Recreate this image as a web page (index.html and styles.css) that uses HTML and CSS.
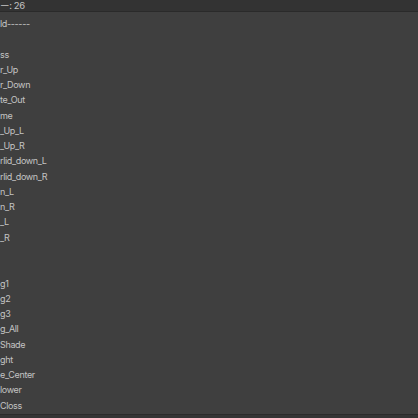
FILE: index.html
```html
<!DOCTYPE html>
<html lang="en">
<head>
  <meta charset="UTF-8" />
  <meta name="viewport" content="width=device-width, initial-scale=1.0"/>
  <title>Blend Shapes</title>
  <link rel="stylesheet" href="styles.css">
</head>
<body>
  <div class="panel">
    <div class="header"><span class="count">ー: 26</span></div>

    <ul class="list">
      <li>ld------</li>
      <li></li>
      <li>ss</li>
      <li>r_Up</li>
      <li>r_Down</li>
      <li>te_Out</li>
      <li>me</li>
      <li>_Up_L</li>
      <li>_Up_R</li>
      <li>rlid_down_L</li>
      <li>rlid_down_R</li>
      <li>n_L</li>
      <li>n_R</li>
      <li>_L</li>
      <li>_R</li>
      <li></li>
      <li></li>
      <li>g1</li>
      <li>g2</li>
      <li>g3</li>
      <li>g_All</li>
      <li>Shade</li>
      <li>ght</li>
      <li>e_Center</li>
      <li>lower</li>
      <li>Closs</li>
    </ul>

    <div class="footer"></div>
  </div>
</body>
</html>
```

FILE: styles.css
```css
html, body {
  margin: 0;
  padding: 0;
}

body {
  font-family: Inter, "Noto Sans CJK JP", sans-serif;
  font-size: 9px;
  letter-spacing: -0.35px;
  color: #c4c4c4;
  background: #3f3f3f;
  overflow: hidden;
}

.panel {
  display: flex;
  flex-direction: column;
  height: 418px;
}

.header {
  height: 11px;
  line-height: 12px;
  background: #333333;
  border-bottom: 1px solid #2a2a2a;
  white-space: nowrap;
}

.count {
  font-size: 9.5px;
}

.list {
  flex: 1;
  list-style: none;
  margin: 0;
  padding: 4px 0 0 0;
  background: #3f3f3f;
}

.list li {
  height: 15.28px;
  line-height: 15.28px;
  white-space: nowrap;
}

.footer {
  height: 3px;
  background: #353535;
  border-top: 1px solid #2b2b2b;
}
```
